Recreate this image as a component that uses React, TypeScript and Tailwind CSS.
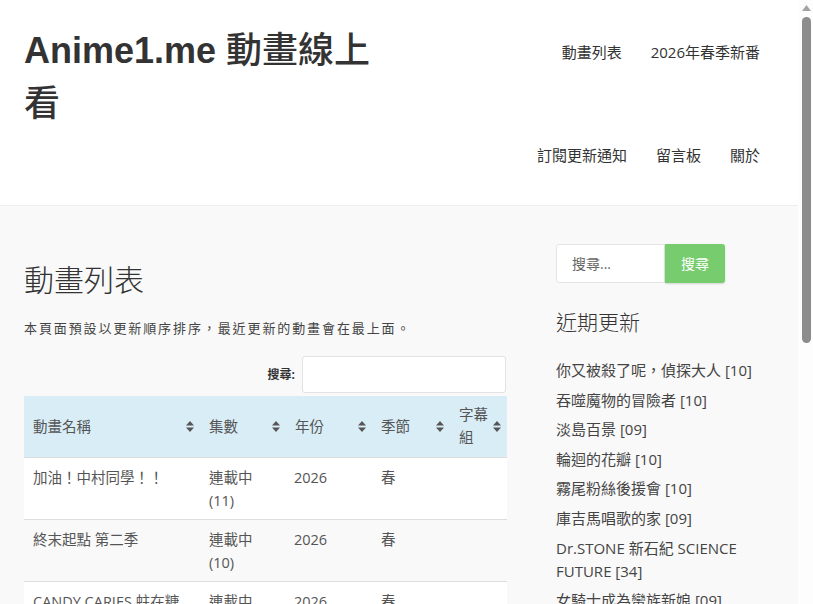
const sans = 'font-["Open_Sans","Noto_Sans_CJK_TC",sans-serif]';

const rows = [
  { name: '加油！中村同學！！', ep: '連載中 (11)', year: '2026', season: '春' },
  { name: '終末起點 第二季', ep: '連載中 (10)', year: '2026', season: '春' },
  { name: 'CANDY CARIES 蛀在糖果屋', ep: '連載中 (10)', year: '2026', season: '春' },
];

const recent = [
  '你又被殺了呢，偵探大人 [10]',
  '吞噬魔物的冒險者 [10]',
  '淡島百景 [09]',
  '輪迴的花瓣 [10]',
  '霧尾粉絲後援會 [10]',
  '庫吉馬唱歌的家 [09]',
  'Dr.STONE 新石紀 SCIENCE FUTURE [34]',
  '女騎士成為蠻族新娘 [09]',
  '異世界悠閒農家 2 [10]',
];

function SortIcon() {
  return (
    <svg width="8" height="11" viewBox="0 0 8 11" className="shrink-0 text-[#555]">
      <path d="M4 0 L8 4.5 L0 4.5 Z" fill="currentColor" />
      <path d="M0 6.5 L8 6.5 L4 11 Z" fill="currentColor" />
    </svg>
  );
}

function Th({ label, w }: { label: React.ReactNode; w: string }) {
  return (
    <th className={`${w} py-[6px] pl-[9px] pr-[6px] align-middle font-normal text-left`}>
      <div className="flex items-center justify-between gap-1">
        <span>{label}</span>
        <SortIcon />
      </div>
    </th>
  );
}

export default function App() {
  return (
    <div className={`flex h-[604px] w-[813px] overflow-hidden ${sans}`}>
      <div className="w-[798px] shrink-0 bg-[#f9f9f9]">
        {/* Header */}
        <header className="flex h-[206px] justify-between border-b border-[#eee] bg-white pl-6 pr-[38px]">
          <h1 className="w-[372px] pt-6 text-[36px] leading-[52px] text-[#333]">
            <span className='font-["Liberation_Sans","Noto_Sans_CJK_TC",sans-serif] font-bold'>Anime1.me </span>
            <span className="font-medium">動畫線上看</span>
          </h1>
          <nav className="flex flex-col items-end gap-[83px] pt-[42px] text-[15px] leading-[20px] text-[#333]">
            <div className="flex gap-[29px]">
              <span>動畫列表</span>
              <span>2026年春季新番</span>
            </div>
            <div className="flex gap-[29px]">
              <span>訂閱更新通知</span>
              <span>留言板</span>
              <span>關於</span>
            </div>
          </nav>
        </header>

        {/* Body */}
        <div className="flex gap-[49px] pl-6 pt-[38px]">
          <main className="w-[483px] shrink-0">
            <h2 className="mt-[19px] text-[30px] font-light leading-[33px] text-[#333]">動畫列表</h2>
            <p className="mt-[22px] text-[13px] leading-[20px] tracking-[1.9px] text-[#444]">
              本頁面預設以更新順序排序，最近更新的動畫會在最上面。
            </p>
            <div className="mt-[18px] flex items-center justify-end gap-[7px] pr-px">
              <label className="text-[12px] font-bold text-[#333]">搜尋:</label>
              <div className="h-[37px] w-[204px] rounded-[3px] border border-[#e2e2e2] bg-white" />
            </div>
            <table className="mt-[3px] w-[483px] table-fixed border-collapse text-[14.5px] leading-[23px] text-[#555]">
              <thead>
                <tr className="h-[61px] border-b border-[#dcdcdc] bg-[#d9edf7]">
                  <Th label="動畫名稱" w="w-[176px]" />
                  <Th label="集數" w="w-[86px]" />
                  <Th label="年份" w="w-[86px]" />
                  <Th label="季節" w="w-[78px]" />
                  <Th label={<>字幕<br />組</>} w="w-[57px]" />
                </tr>
              </thead>
              <tbody>
                {rows.map((r, i) => (
                  <tr key={r.name} className={`border-t border-[#ddd] align-top ${i % 2 ? 'bg-[#f9f9f9]' : 'bg-white'}`}>
                    <td className="pb-[7px] pl-[9px] pr-2 pt-[8px]">{r.name}</td>
                    <td className="pb-[7px] pl-[9px] pr-2 pt-[8px]">{r.ep}</td>
                    <td className="pb-[7px] pl-[8px] pr-2 pt-[8px]">{r.year}</td>
                    <td className="pb-[7px] pl-[9px] pr-2 pt-[8px]">{r.season}</td>
                    <td className="pb-[7px] pl-[9px] pr-2 pt-[8px]"></td>
                  </tr>
                ))}
              </tbody>
            </table>
          </main>

          <aside className="w-[204px] shrink-0">
            <div className="flex">
              <div className="flex h-[39px] w-[109px] items-center rounded-l-[3px] border border-[#e5e5e5] bg-white pl-[15px] text-[14px] text-[#666]">
                搜尋...
              </div>
              <button className="h-[39px] w-[60px] rounded-r-[3px] bg-[#77cc6d] text-[14px] text-white shadow-[0_1px_2px_rgba(0,0,0,0.15)]">
                搜尋
              </button>
            </div>
            <h3 className="mt-[27px] text-[21px] font-light leading-[25px] text-[#333]">近期更新</h3>
            <ul className="mt-[24px] flex flex-col gap-[6.6px] text-[15px] leading-[23px] text-[#444]">
              {recent.map((t) => (
                <li key={t}>{t}</li>
              ))}
            </ul>
          </aside>
        </div>
      </div>

      {/* Scrollbar */}
      <div className="flex w-[15px] shrink-0 flex-col items-center bg-[#fdfdfd] pt-[5px]">
        <svg width="9" height="6" viewBox="0 0 9 6" className="ml-[2px]">
          <path d="M4.5 0 L9 6 L0 6 Z" fill="#a3a3a3" />
        </svg>
        <div className="ml-[2px] mt-[6px] h-[326px] w-[9px] rounded-full bg-[#8c8c8c]" />
      </div>
    </div>
  );
}
